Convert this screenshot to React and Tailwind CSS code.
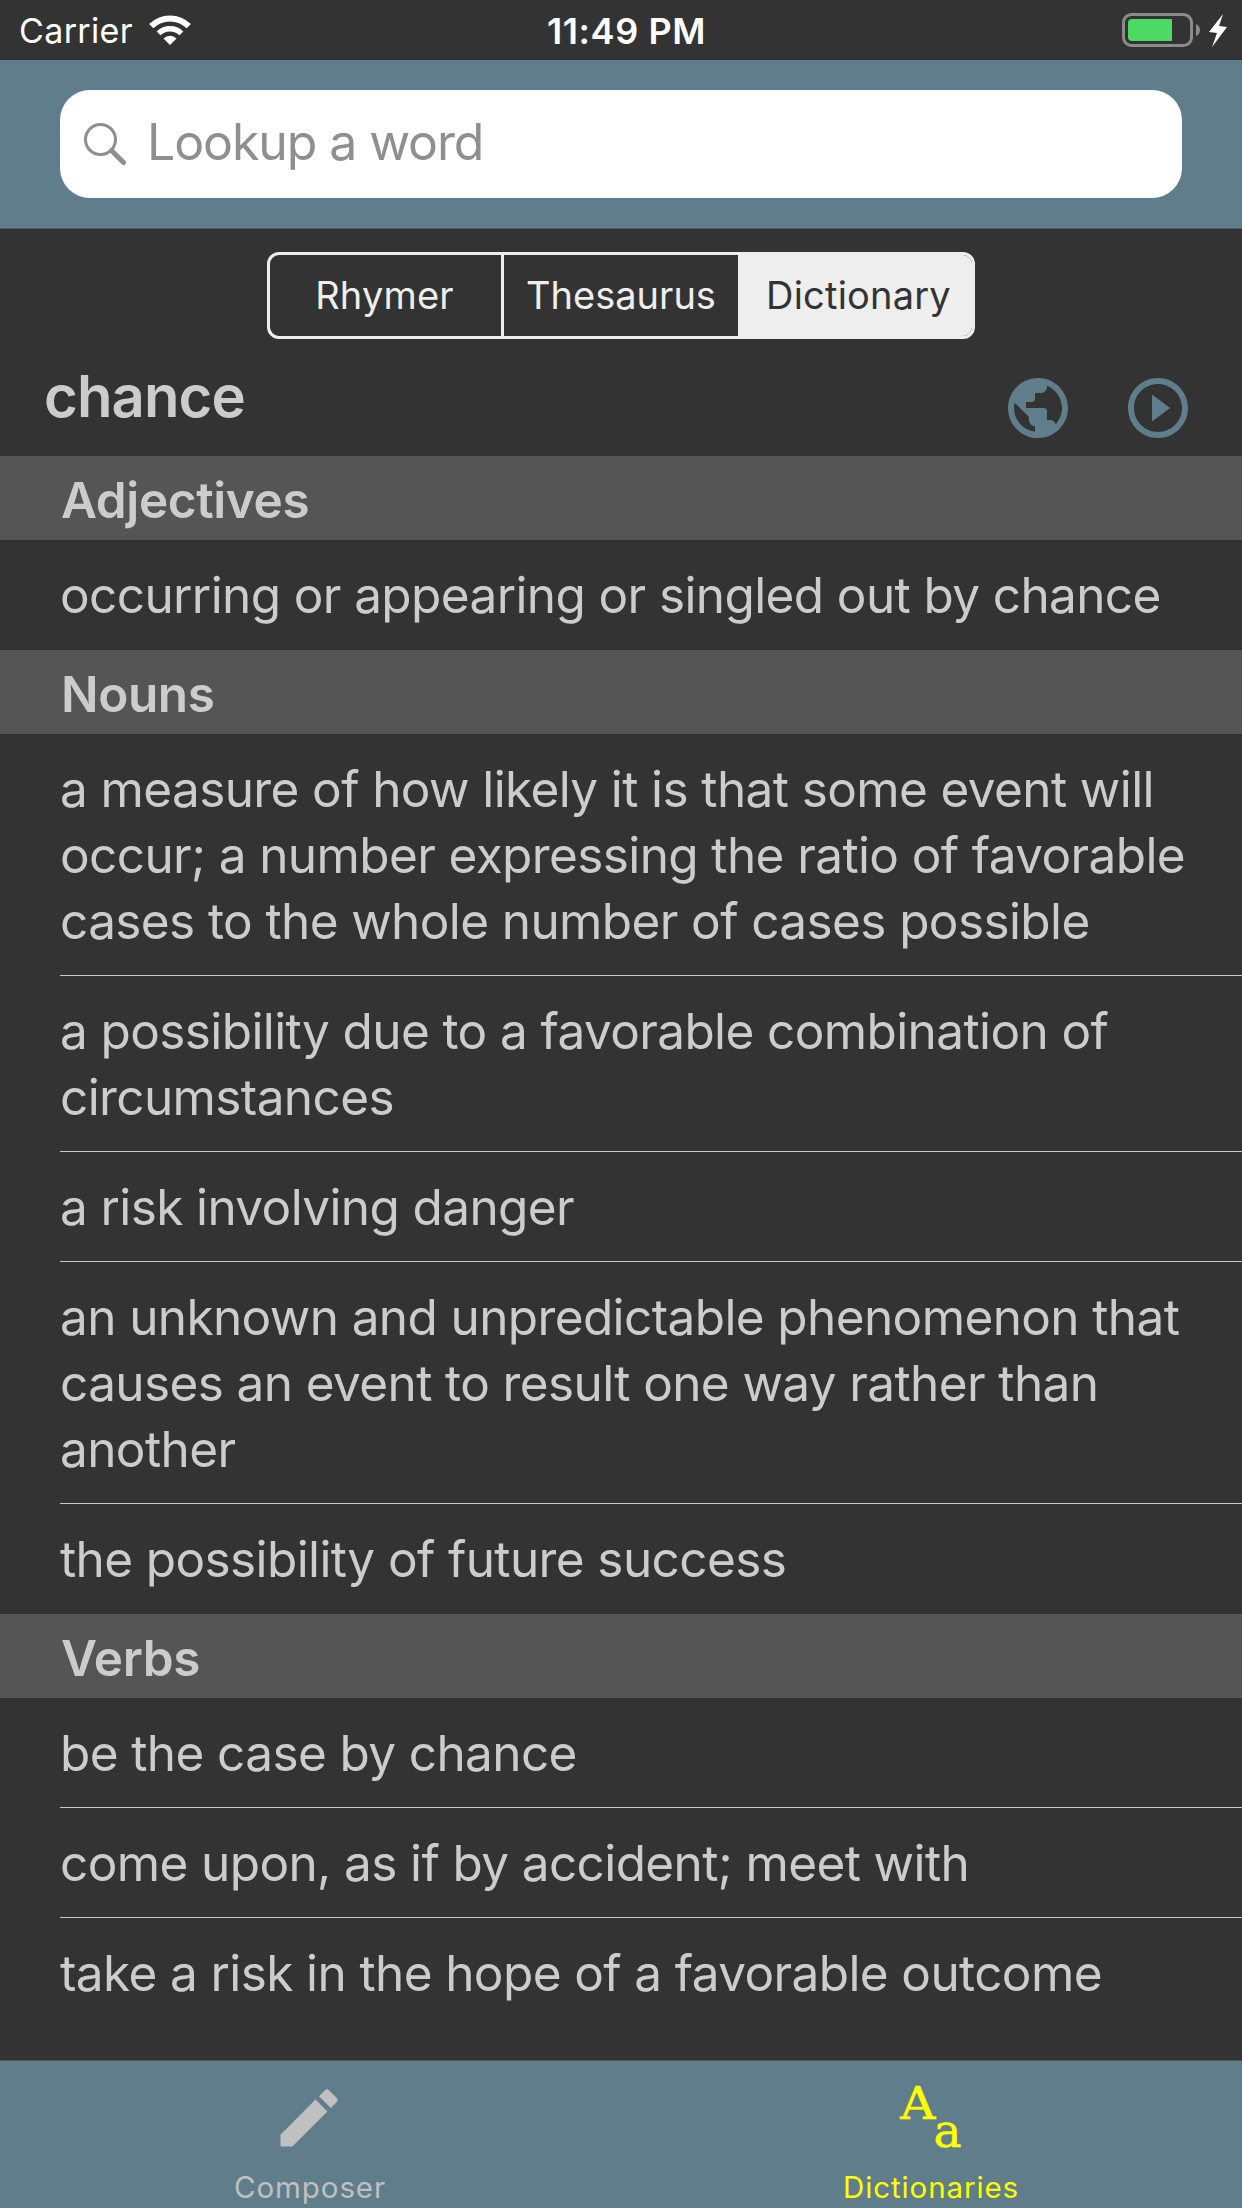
import React from "react";
import { MdPublic, MdPlayCircleOutline, MdEdit } from "react-icons/md";

const sections = [
  { title: "Adjectives", items: [["occurring or appearing or singled out by chance"]] },
  {
    title: "Nouns",
    items: [
      [
        "a measure of how likely it is that some event will",
        "occur; a number expressing the ratio of favorable",
        "cases to the whole number of cases possible",
      ],
      ["a possibility due to a favorable combination of", "circumstances"],
      ["a risk involving danger"],
      [
        "an unknown and unpredictable phenomenon that",
        "causes an event to result one way rather than",
        "another",
      ],
      ["the possibility of future success"],
    ],
  },
  {
    title: "Verbs",
    items: [
      ["be the case by chance"],
      ["come upon, as if by accident; meet with"],
      ["take a risk in the hope of a favorable outcome"],
    ],
  },
];

function StatusBar() {
  return (
    <div className="grid h-[60px] grid-cols-3 items-center pl-[19px] pr-[12px] text-white">
      <div className="flex items-center">
        <span className="pt-[2px] text-[34px] leading-[58px] tracking-[0.35px]">Carrier</span>
        <svg className="ml-[16px] h-[30px] w-[42px]" viewBox="0 0 42 30" fill="none" stroke="#fff">
          <path d="M2.2 11.2a26.5 26.5 0 0 1 37.6 0" strokeWidth="6" />
          <path d="M9.6 18.4a16.2 16.2 0 0 1 22.8 0" strokeWidth="5.4" />
          <path d="M21 30l-6.5-6.6a9.3 9.3 0 0 1 13 0z" fill="#fff" stroke="none" />
        </svg>
      </div>
      <span className="pl-[4px] pt-[2px] text-center text-[36px] font-semibold leading-[58px] tracking-[0.6px]">11:49 PM</span>
      <svg className="h-[50px] w-[108px] justify-self-end" viewBox="0 0 108 50">
        <rect x="1.5" y="9.5" width="68" height="31" rx="8" fill="none" stroke="#8b8b8b" strokeWidth="3" />
        <path d="M10 14h40v22H10a4 4 0 0 1-4-4V18a4 4 0 0 1 4-4z" fill="#4cd964" />
        <path d="M74 19q4 2 4 6t-4 6z" fill="#8b8b8b" />
        <path d="M101 9L87 27l8 1-5 14 15-20-8-1z" fill="#fff" />
      </svg>
    </div>
  );
}

function SearchHeader() {
  return (
    <div className="h-[169px] border-b border-[#555555] bg-[#607d8b] px-[60px] pt-[30px]">
      <div className="flex h-[108px] items-center rounded-[30px] bg-white pl-[24px] text-[#8e8e93]">
        <svg className="h-[42px] w-[42px]" viewBox="0 0 42 42" fill="none" stroke="currentColor">
          <circle cx="16.5" cy="16.5" r="15" strokeWidth="3" />
          <path d="M27.5 27.5l12 12" strokeWidth="5" strokeLinecap="round" />
        </svg>
        <span className="ml-[21px] pb-[4px] text-[50px] tracking-[-1.1px]">Lookup a word</span>
      </div>
    </div>
  );
}

function Segments() {
  return (
    <div className="mx-auto mt-[23px] grid h-[87px] w-[708px] grid-cols-[231px_237px_234px] overflow-hidden rounded-[12px] border-[3px] border-[#eeeeee] text-center text-[38px] leading-[80px] tracking-[0.2px] text-[#eeeeee]">
      <div className="pr-[2px]">Rhymer</div>
      <div className="border-l-[3px] border-[#eeeeee] tracking-[0px]">Thesaurus</div>
      <div className="bg-[#eeeeee] pl-[7px] text-[#333333]">Dictionary</div>
    </div>
  );
}

function Section({ title, items }) {
  return (
    <section>
      <h2 className="h-[84px] bg-[#555555] pl-[61px] text-[49.5px] font-semibold leading-[88px] tracking-[-0.4px]">{title}</h2>
      <ul className="pl-[60px]">
        {items.map((lines, i) => (
          <li key={i} className="relative py-[22px] text-[49.5px] leading-[66px] tracking-[-0.61px]">
            {lines.map((line) => (
              <p key={line} className="whitespace-nowrap">{line}</p>
            ))}
            {i < items.length - 1 && <div className="absolute inset-x-0 bottom-0 h-px bg-[#c8c7cc]" />}
          </li>
        ))}
      </ul>
    </section>
  );
}

export default function App() {
  return (
    <div className="flex h-[2208px] w-[1242px] flex-col overflow-hidden bg-[#333333] font-['Inter',sans-serif] text-[#cccccc]">
      <StatusBar />
      <SearchHeader />
      <Segments />
      <div className="flex h-[117px] justify-between pl-[44px] pr-[48px]">
        <h1 className="text-[58px] font-semibold leading-[114px] tracking-[-0.9px]">chance</h1>
        <div className="flex gap-[48px] pt-[33px] text-[#607d8b]">
          <MdPublic size={72} />
          <MdPlayCircleOutline size={72} />
        </div>
      </div>
      <main className="flex-1">
        {sections.map((s) => (
          <Section key={s.title} {...s} />
        ))}
      </main>
      <nav className="grid h-[148px] grid-cols-2 border-t border-[#555555] bg-[#607d8b] text-[29.5px] leading-[36px]">
        <div className="flex flex-col items-center text-[#c0c0c0]">
          <MdEdit className="mr-[3px] mt-[19px]" size={76} />
          <span className="mr-[1px] mt-[13px] tracking-[0.9px]">Composer</span>
        </div>
        <div className="flex flex-col items-center text-[#ffff00]">
          <div className="ml-[4px] mt-[13px] flex h-[82px] w-[76px] font-['DejaVu_Serif',serif] leading-[60px]">
            <span className="w-[36px] origin-left scale-x-[1.08] pl-[4px] text-[45px] [-webkit-text-stroke:0.5px_#ffff00]">A</span>
            <span className="pl-[2px] pt-[27px] text-[47px] [-webkit-text-stroke:0.5px_#ffff00]">a</span>
          </div>
          <span className="mr-[1px] mt-[13px] tracking-[0.9px]">Dictionaries</span>
        </div>
      </nav>
    </div>
  );
}
